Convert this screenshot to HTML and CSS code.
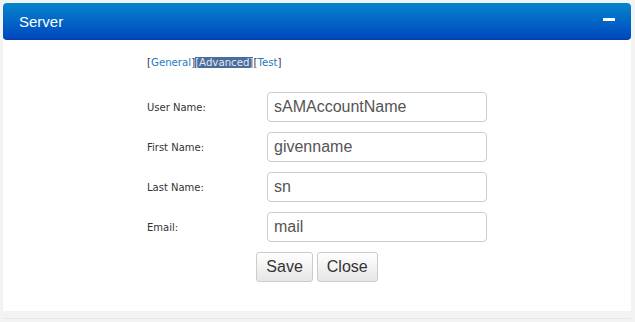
FILE: index.html
```html
<!DOCTYPE html>
<html>
<head>
    <title>Server</title>
    <link rel="stylesheet" href="styles.css">
</head>
<body>
    <div class="panel">
        <div class="panel-header">
            <span class="panel-title">Server</span>
            <span class="collapse-btn"></span>
        </div>
        <div class="panel-body">
            <div class="tabs">
                <span class="br">[</span><a class="tab" href="#">General</a><span class="br">]</span><span class="tab-active">[Advanced]</span><span class="br">[</span><a class="tab" href="#">Test</a><span class="br">]</span>
            </div>

            <div class="form-grid">
                <label class="field-label">User Name:</label>
                <input class="field-input" type="text" value="sAMAccountName">

                <label class="field-label">First Name:</label>
                <input class="field-input" type="text" value="givenname">

                <label class="field-label">Last Name:</label>
                <input class="field-input" type="text" value="sn">

                <label class="field-label">Email:</label>
                <input class="field-input" type="text" value="mail">
            </div>

            <div class="form-buttons">
                <button class="btn">Save</button>
                <button class="btn">Close</button>
            </div>
        </div>
    </div>
    <div class="page-rule"></div>
</body>
</html>
```

FILE: styles.css
```css
body {
    margin: 0;
    padding: 3px 4px 0 3px;
    background: #f3f3f3;
    font-family: "Liberation Sans", Arial, sans-serif;
}

.panel {
    background: #ffffff;
}

.panel-header {
    height: 37px;
    box-sizing: border-box;
    display: flex;
    align-items: center;
    justify-content: space-between;
    padding: 0 16px 0 16px;
    background: linear-gradient(to bottom, #0586cb, #0046c0);
    border-bottom: 1px solid #0a3f9e;
    border-radius: 4px;
}

.panel-title {
    color: #ffffff;
    font-size: 15px;
    padding-top: 1px;
}

.collapse-btn {
    width: 12px;
    height: 3px;
    background: #ffffff;
    margin-bottom: 4px;
}

.panel-body {
    display: flex;
    flex-direction: column;
    align-items: center;
    padding: 16px 0 29px;
}

.tabs {
    width: 340px;
    font-family: "DejaVu Sans", Verdana, sans-serif;
    font-size: 10.2px;
    line-height: 14px;
    color: #333333;
    margin-bottom: 22px;
}

.tabs .br {
    color: #3b2f4a;
}

.tab {
    color: #1f7ac2;
    text-decoration: none;
}

.tab-active {
    background: #4a6d9c;
    color: #e4e8f0;
}

.form-grid {
    width: 340px;
    display: grid;
    grid-template-columns: 120px 220px;
    row-gap: 10px;
    align-items: center;
}

.field-label {
    font-family: "DejaVu Sans", Verdana, sans-serif;
    font-size: 10px;
    color: #333333;
}

.field-input {
    height: 30px;
    box-sizing: border-box;
    border: 1px solid #cccccc;
    border-radius: 4px;
    padding: 0 6px;
    font-family: "Liberation Sans", Arial, sans-serif;
    font-size: 16px;
    color: #555555;
    outline: none;
}

.form-buttons {
    display: flex;
    gap: 4px;
    margin-top: 10px;
}

.btn {
    height: 30px;
    padding: 0 9px;
    border: 1px solid #cccccc;
    border-radius: 3px;
    background: linear-gradient(to bottom, #ffffff, #e6e6e6);
    font-family: "Liberation Sans", Arial, sans-serif;
    font-size: 16px;
    color: #333333;
    cursor: pointer;
}

.page-rule {
    margin-top: 7px;
    border-top: 1px solid #e6e6e6;
}
```
